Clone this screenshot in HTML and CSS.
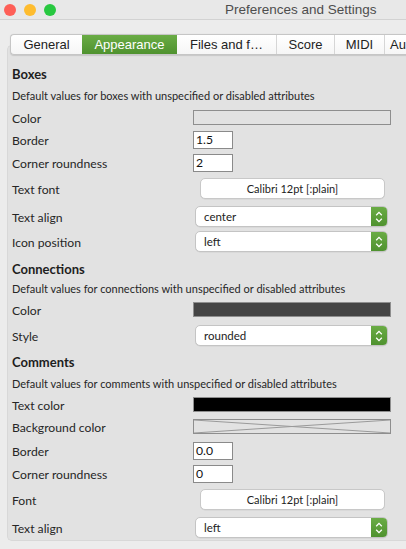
FILE: index.html
```html
<!DOCTYPE html>
<html>
<head>
<meta charset="utf-8">
<link rel="stylesheet" href="styles.css">
</head>
<body>
<div class="window">
  <div class="titlebar">
    <div class="lights">
      <span class="light red"></span>
      <span class="light orange"></span>
      <span class="light green"></span>
    </div>
    <div class="title">Preferences and Settings</div>
  </div>

  <div class="tabs">
    <div class="tab t-general">General</div>
    <div class="tab t-appearance active">Appearance</div>
    <div class="tab t-files">Files and f…</div>
    <div class="tab t-score">Score</div>
    <div class="tab t-midi">MIDI</div>
    <div class="tab t-audio">Au</div>
  </div>

  <div class="panel">
    <div class="heading h-first">Boxes</div>
    <div class="desc d-22">Default values for boxes with unspecified or disabled attributes</div>
    <div class="row r-22"><span class="label">Color</span><span class="swatch sw-empty"></span></div>
    <div class="row r-23"><span class="label">Border</span><span class="field">1.5</span></div>
    <div class="row r-23"><span class="label">Corner roundness</span><span class="field">2</span></div>
    <div class="row r-29"><span class="label">Text font</span><span class="fontbtn">Calibri 12pt [:plain]</span></div>
    <div class="row r-27"><span class="label">Text align</span><span class="popup"><span class="ptext">center</span><span class="parrow"><svg width="8" height="14" viewBox="0 0 8 14"><path d="M1.2 5.2 L4 2.4 L6.8 5.2 M1.2 8.8 L4 11.6 L6.8 8.8" fill="none" stroke="#fff" stroke-width="1.3"/></svg></span></span></div>
    <div class="row r-23"><span class="label">Icon position</span><span class="popup"><span class="ptext">left</span><span class="parrow"><svg width="8" height="14" viewBox="0 0 8 14"><path d="M1.2 5.2 L4 2.4 L6.8 5.2 M1.2 8.8 L4 11.6 L6.8 8.8" fill="none" stroke="#fff" stroke-width="1.3"/></svg></span></span></div>

    <div class="heading h-conn">Connections</div>
    <div class="desc d-18">Default values for connections with unspecified or disabled attributes</div>
    <div class="row r-25"><span class="label">Color</span><span class="swatch sw-dark"></span></div>
    <div class="row r-27"><span class="label">Style</span><span class="popup"><span class="ptext">rounded</span><span class="parrow"><svg width="8" height="14" viewBox="0 0 8 14"><path d="M1.2 5.2 L4 2.4 L6.8 5.2 M1.2 8.8 L4 11.6 L6.8 8.8" fill="none" stroke="#fff" stroke-width="1.3"/></svg></span></span></div>

    <div class="heading h-comm">Comments</div>
    <div class="desc d-22">Default values for comments with unspecified or disabled attributes</div>
    <div class="row r-20"><span class="label">Text color</span><span class="swatch sw-black"></span></div>
    <div class="row r-25"><span class="label">Background color</span><span class="swatch sw-none"><svg width="196" height="13" viewBox="0 0 196 13" preserveAspectRatio="none"><path d="M0 0 L196 13 M0 13 L196 0" stroke="#9a9a9a" stroke-width="1" fill="none"/></svg></span></div>
    <div class="row r-23"><span class="label">Border</span><span class="field">0.0</span></div>
    <div class="row r-23"><span class="label">Corner roundness</span><span class="field">0</span></div>
    <div class="row r-29"><span class="label">Font</span><span class="fontbtn">Calibri 12pt [:plain]</span></div>
    <div class="row r-27"><span class="label">Text align</span><span class="popup"><span class="ptext">left</span><span class="parrow"><svg width="8" height="14" viewBox="0 0 8 14"><path d="M1.2 5.2 L4 2.4 L6.8 5.2 M1.2 8.8 L4 11.6 L6.8 8.8" fill="none" stroke="#fff" stroke-width="1.3"/></svg></span></span></div>
  </div>
</div>
</body>
</html>
```

FILE: styles.css
```css
html, body {
  margin: 0;
  padding: 0;
}
body {
  width: 406px;
  height: 549px;
  overflow: hidden;
  background: #ececec;
}
.window {
  width: 406px;
  height: 549px;
  background: #ececec;
  overflow: hidden;
}
.titlebar {
  height: 19px;
  border-bottom: 1px solid #d2d2d2;
  background: #e8e8e8;
  display: flex;
  align-items: center;
}
.lights {
  display: flex;
  gap: 8px;
  padding-left: 4px;
}
.light {
  width: 12px;
  height: 12px;
  border-radius: 50%;
  display: block;
}
.red { background: #fe5f57; }
.orange { background: #febc2e; }
.green { background: #28c840; }
.title {
  font-family: "Liberation Sans", Arial, sans-serif;
  font-size: 13.5px;
  color: #4d4d4d;
  margin-left: 169px;
  white-space: nowrap;
}
.tabs {
  display: flex;
  margin-top: 14px;
  margin-left: 10px;
  height: 19px;
  width: 420px;
  border: 1px solid #c6c6c6;
  border-right: 0;
  border-radius: 4px 0 0 4px;
  background: linear-gradient(#ffffff, #f6f6f6);
  position: relative;
  z-index: 1;
  margin-bottom: -10px;
  font-family: "Liberation Sans", Arial, sans-serif;
  font-size: 13px;
  color: #222;
  box-shadow: 0 0.5px 1px rgba(0,0,0,0.12);
}
.tab {
  display: flex;
  align-items: center;
  justify-content: center;
  border-left: 1px solid #d6d6d6;
  white-space: nowrap;
  box-sizing: border-box;
  height: 19px;
}
.t-general { width: 71px; border-left: 0; }
.t-appearance { width: 95px; }
.t-files { width: 99px; border-left: 0; }
.t-score { width: 58px; }
.t-midi { width: 50px; }
.t-audio { width: 40px; justify-content: flex-start; padding-left: 5px; }
.tab.active {
  background: linear-gradient(#6aac45, #4f922f);
  color: #fff;
  border-left: 0;
}

.panel {
  margin-left: 7px;
  width: 420px;
  height: 496px;
  box-sizing: border-box;
  background: #e2e2e2;
  border: 1px solid #d8d8d8;
  border-right: 0;
  border-radius: 5px 0 0 5px;
  padding: 18px 0 0 4px;
  font-family: "Lato", "Open Sans", sans-serif;
  color: #262626;
}
.heading {
  height: 20px;
  display: flex;
  align-items: center;
  font-weight: bold;
  font-size: 13px;
  color: #1e1e1e;
}
.h-conn { margin-top: 6px; }
.h-comm { margin-top: 3px; }
.desc {
  display: flex;
  align-items: center;
  font-size: 11px;
  white-space: nowrap;
}
.d-22 { height: 22px; }
.d-18 { height: 18px; }
.row {
  display: grid;
  grid-template-columns: 181px auto;
  align-items: center;
  justify-items: start;
}
.r-20 { height: 20px; }
.r-22 { height: 22px; }
.r-23 { height: 23px; }
.r-25 { height: 25px; }
.r-27 { height: 27px; }
.r-29 { height: 29px; }
.label {
  font-size: 12.2px;
  padding-top: 2px;
}
.swatch {
  display: block;
  width: 198px;
  height: 15px;
  box-sizing: border-box;
  border: 1px solid #8e8e8e;
}
.sw-empty { background: #e2e2e2; }
.sw-dark { background: #444444; }
.sw-black { background: #000; }
.sw-none { background: #e2e2e2; }
.sw-none svg { display: block; }
.field {
  display: flex;
  align-items: center;
  width: 40px;
  height: 18px;
  box-sizing: border-box;
  border: 1px solid #8a8a8a;
  background: #fff;
  font-size: 12.2px;
  padding-left: 2px;
  color: #111;
}
.fontbtn {
  display: flex;
  align-items: center;
  justify-content: center;
  margin-left: 7px;
  width: 185px;
  height: 21px;
  box-sizing: border-box;
  background: #fff;
  border: 1px solid #c8c8c8;
  border-radius: 5px;
  font-size: 11px;
  color: #222;
  box-shadow: 0 0.5px 0.5px rgba(0,0,0,0.08);
}
.popup {
  display: flex;
  margin-left: 2px;
  width: 193px;
  height: 21px;
  box-sizing: border-box;
  background: #fff;
  border: 1px solid #c4c4c4;
  border-radius: 5px;
  overflow: hidden;
  box-shadow: 0 0.5px 0.5px rgba(0,0,0,0.08);
}
.ptext {
  flex: 1;
  display: flex;
  align-items: center;
  padding-left: 8px;
  font-size: 11.5px;
  color: #222;
}
.parrow {
  width: 16px;
  display: flex;
  align-items: center;
  justify-content: center;
  background: linear-gradient(#6aac45, #4f922f);
}
.parrow svg { display: block; }
```
